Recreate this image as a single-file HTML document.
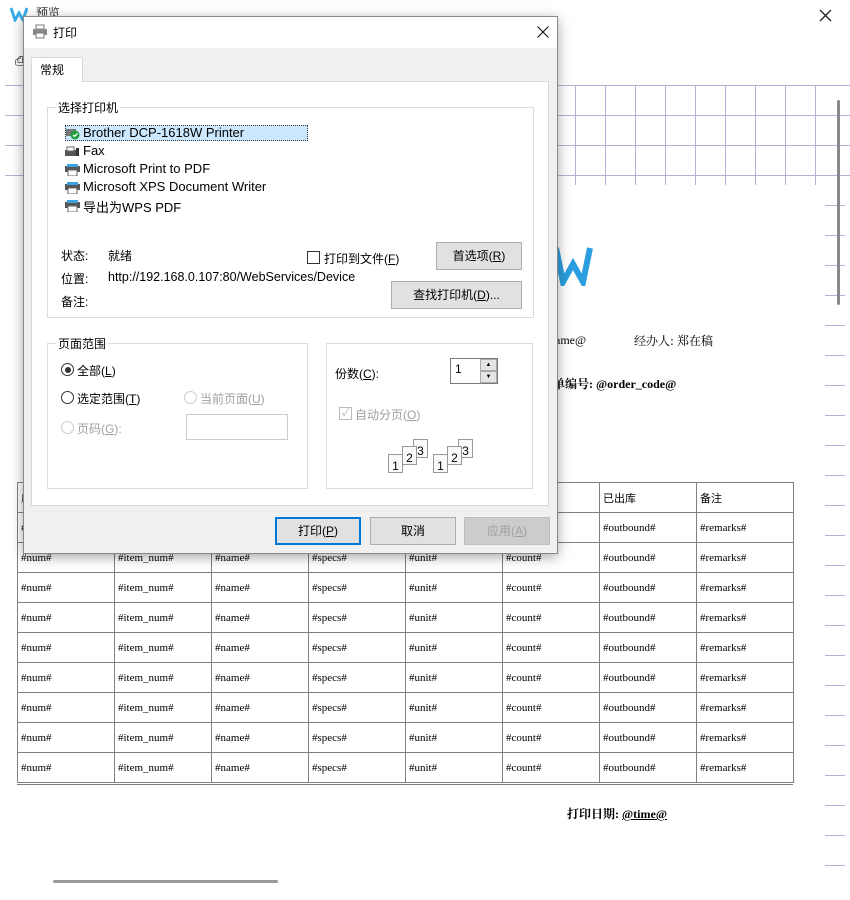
<!DOCTYPE html>
<html><head><meta charset="utf-8"><style>
*{margin:0;padding:0;box-sizing:border-box}
body{width:850px;height:900px;background:#fff;position:relative;overflow:hidden;font-family:"Liberation Sans","Noto Sans CJK SC",sans-serif;font-size:12px;color:#000}
.a{position:absolute}
.hl{position:absolute;height:1px;background:#b4b0d8}
.vl{position:absolute;width:1px;background:#b4b0d8}
table{position:absolute;left:17px;top:482px;border-collapse:collapse;font-family:"Liberation Serif","Noto Serif CJK SC",serif;font-size:11px}
td{border:1px solid #808080;width:97px;height:30px;padding-left:3px;vertical-align:middle;white-space:nowrap}
.dlg{position:absolute;left:23px;top:16px;width:535px;height:538px;background:#f0f0f0;border:1px solid #888;box-shadow:0 3px 12px rgba(0,0,0,.35)}
.grp{position:absolute;border:1px solid #dcdcdc}
.gl{position:absolute;top:-9px;left:8px;background:#fff;padding:0 2px;font-size:12px}
.btn{position:absolute;background:#e1e1e1;border:1px solid #adadad;text-align:center;font-size:12px}
.pg{position:absolute;width:15px;height:19px;background:#fafafa;border:1px solid #999;font-size:12px;text-align:center;line-height:22px}
.u{text-decoration:underline}
.gray{color:#a0a0a0}
</style></head><body>
<div class="a" style="left:10px;top:6px;width:18px;height:16px">
<svg width="18" height="16"><path d="M1 2 L5 14 L9 7 L13 14 L17 2" fill="none" stroke="#3aaee8" stroke-width="3"/></svg></div>
<div class="a" style="left:36px;top:4px;font-size:12px;color:#333">预览</div>
<div class="a" style="left:819px;top:9px"><svg width="13" height="13"><path d="M1 1L12 12M12 1L1 12" stroke="#222" stroke-width="1.3"/></svg></div>
<div class="a" style="left:15px;top:53px;font-size:13px">⎙</div>
<div class="hl" style="left:5px;top:85px;width:845px"></div>
<div class="hl" style="left:5px;top:115px;width:845px"></div>
<div class="hl" style="left:5px;top:145px;width:845px"></div>
<div class="hl" style="left:5px;top:175px;width:845px"></div>
<div class="vl" style="left:575px;top:85px;height:100px"></div>
<div class="vl" style="left:605px;top:85px;height:100px"></div>
<div class="vl" style="left:635px;top:85px;height:100px"></div>
<div class="vl" style="left:665px;top:85px;height:100px"></div>
<div class="vl" style="left:695px;top:85px;height:100px"></div>
<div class="vl" style="left:725px;top:85px;height:100px"></div>
<div class="vl" style="left:755px;top:85px;height:100px"></div>
<div class="vl" style="left:785px;top:85px;height:100px"></div>
<div class="vl" style="left:815px;top:85px;height:100px"></div>
<div id="ticks"></div>
<div class="a" style="left:837px;top:100px;width:3px;height:205px;background:#8a8a8a;border-radius:2px"></div>
<div class="a" style="left:553px;top:246px;width:42px;height:40px">
<svg width="42" height="40"><path d="M3 2 L10 36 L20 18 L30 36 L37 2" fill="none" stroke="#2b9ee0" stroke-width="6"/></svg></div>
<div class="a" style="left:555px;top:333px;font-family:'Liberation Serif',serif;font-size:12px">ame@</div>
<div class="a" style="left:634px;top:332px;font-size:12px;font-family:'Noto Serif CJK SC',serif">经办人: 郑在稿</div>
<div class="a" style="left:553px;top:375px;font-size:12px;font-weight:bold;font-family:'Liberation Serif','Noto Serif CJK SC',serif">单编号: @order_code@</div>
<table id="tb"></table>
<div class="a" style="left:17px;top:784px;width:776px;height:1px;background:#808080"></div>
<div class="a" style="left:567px;top:805px;font-size:12px;font-weight:bold;font-family:'Liberation Serif','Noto Serif CJK SC',serif">打印日期: <span class="u">@time@</span></div>
<div class="a" style="left:53px;top:880px;width:225px;height:3px;background:#999;border-radius:2px"></div>

<div class="dlg">
 <div class="a" style="left:0;top:0;width:533px;height:31px;background:#fff"></div>
 <div class="a" style="left:8px;top:7px;width:16px;height:14px">
 <svg width="16" height="15"><rect x="4" y="1" width="8" height="4" fill="#fff" stroke="#777"/><rect x="1" y="5" width="14" height="6" fill="#8a8a8a"/><rect x="4" y="9" width="8" height="5" fill="#fff" stroke="#777"/></svg></div>
 <div class="a" style="left:29px;top:7px;font-size:12px">打印</div>
 <div class="a" style="left:513px;top:9px"><svg width="12" height="12"><path d="M0.5 0.5L11.5 11.5M11.5 0.5L0.5 11.5" stroke="#111" stroke-width="1.1"/></svg></div>
 <div class="a" style="left:7px;top:40px;width:52px;height:25px;background:#fff;border:1px solid #d9d9d9;border-bottom:none;z-index:2;padding:3px 0 0 8px">常规</div>
 <div class="a" style="left:7px;top:64px;width:518px;height:425px;background:#fff;border:1px solid #d9d9d9">
  <div class="grp" style="left:15px;top:25px;width:487px;height:211px">
   <div class="gl">选择打印机</div>
   <div class="a" style="left:17px;top:17px;width:243px;height:16px;background:#cce8ff;border:1px dotted #333"></div>
   <div class="a" style="left:18px;top:18px;width:14px;height:14px"><svg width="14" height="14"><rect x="0" y="3" width="10" height="7" fill="#777"/><circle cx="9" cy="9" r="4.5" fill="#1f9e3a"/><path d="M7 9 l1.5 1.5 l3-3" stroke="#fff" fill="none" stroke-width="1.3"/></svg></div>
   <div class="a" style="left:35px;top:17px;font-size:13px">Brother DCP-1618W Printer</div>
   <div class="a" style="left:17px;top:38px;width:15px;height:12px"><svg width="15" height="12"><rect x="0" y="4" width="11" height="6" fill="#555"/><rect x="2" y="1" width="7" height="4" fill="#fff" stroke="#666"/><rect x="11" y="2" width="3" height="8" fill="#333"/></svg></div>
   <div class="a" style="left:35px;top:35px;font-size:13px">Fax</div>
   <div class="a" style="left:17px;top:56px;width:15px;height:12px"><svg width="15" height="12"><rect x="0" y="2" width="15" height="6" fill="#555"/><rect x="2" y="0" width="11" height="3" fill="#3b9fe0"/><rect x="3" y="6" width="9" height="6" fill="#fff" stroke="#666"/></svg></div>
   <div class="a" style="left:35px;top:53px;font-size:13px">Microsoft Print to PDF</div>
   <div class="a" style="left:17px;top:74px;width:15px;height:12px"><svg width="15" height="12"><rect x="0" y="2" width="15" height="6" fill="#555"/><rect x="2" y="0" width="11" height="3" fill="#3b9fe0"/><rect x="3" y="6" width="9" height="6" fill="#fff" stroke="#666"/></svg></div>
   <div class="a" style="left:35px;top:71px;font-size:13px">Microsoft XPS Document Writer</div>
   <div class="a" style="left:17px;top:92px;width:15px;height:12px"><svg width="15" height="12"><rect x="0" y="2" width="15" height="6" fill="#555"/><rect x="2" y="0" width="11" height="3" fill="#3b9fe0"/><rect x="3" y="6" width="9" height="6" fill="#fff" stroke="#666"/></svg></div>
   <div class="a" style="left:35px;top:89px;font-size:13px">导出为WPS PDF</div>
   <div class="a" style="left:13px;top:139px">状态:</div>
   <div class="a" style="left:60px;top:139px">就绪</div>
   <div class="a" style="left:13px;top:162px">位置:</div>
   <div class="a" style="left:60px;top:162px;font-size:12.5px">http://192.168.0.107:80/WebServices/Device</div>
   <div class="a" style="left:13px;top:185px">备注:</div>
   <div class="a" style="left:259px;top:143px;width:13px;height:13px;border:1px solid #333;background:#fff"></div>
   <div class="a" style="left:276px;top:142px">打印到文件(<span class="u">F</span>)</div>
   <div class="btn" style="left:388px;top:134px;width:86px;height:28px;line-height:26px">首选项(<span class="u">R</span>)</div>
   <div class="btn" style="left:343px;top:173px;width:131px;height:28px;line-height:26px">查找打印机(<span class="u">D</span>)...</div>
  </div>
  <div class="grp" style="left:15px;top:261px;width:261px;height:146px">
   <div class="gl">页面范围</div>
   <div class="a" style="left:13px;top:19px;width:13px;height:13px;border:1px solid #333;border-radius:50%;background:#fff"><div class="a" style="left:2.5px;top:2.5px;width:6px;height:6px;border-radius:50%;background:#333"></div></div>
   <div class="a" style="left:29px;top:18px">全部(<span class="u">L</span>)</div>
   <div class="a" style="left:13px;top:47px;width:13px;height:13px;border:1px solid #333;border-radius:50%;background:#fff"></div>
   <div class="a" style="left:29px;top:46px">选定范围(<span class="u">T</span>)</div>
   <div class="a" style="left:136px;top:47px;width:13px;height:13px;border:1px solid #ccc;border-radius:50%"></div>
   <div class="a gray" style="left:152px;top:46px">当前页面(<span class="u">U</span>)</div>
   <div class="a" style="left:13px;top:77px;width:13px;height:13px;border:1px solid #ccc;border-radius:50%"></div>
   <div class="a gray" style="left:29px;top:76px">页码(<span class="u">G</span>):</div>
   <div class="a" style="left:138px;top:70px;width:102px;height:26px;border:1px solid #ccc"></div>
  </div>
  <div class="grp" style="left:294px;top:261px;width:207px;height:146px">
   <div class="a" style="left:8px;top:21px">份数(<span class="u">C</span>):</div>
   <div class="a" style="left:123px;top:14px;width:48px;height:26px;border:1px solid #7a7a7a;background:#fff;padding:3px 0 0 4px">1</div>
   <div class="a" style="left:153px;top:15px;width:17px;height:12px;background:#e5e5e5;border:1px solid #aaa;font-size:6px;text-align:center;line-height:10px">▲</div>
   <div class="a" style="left:153px;top:27px;width:17px;height:12px;background:#e5e5e5;border:1px solid #aaa;font-size:6px;text-align:center;line-height:10px">▼</div>
   <div class="a" style="left:12px;top:63px;width:13px;height:13px;border:1px solid #bbb;color:#aaa;font-size:10px;line-height:11px;text-align:center">✓</div>
   <div class="a gray" style="left:28px;top:62px">自动分页(<span class="u">O</span>)</div>
   <div class="pg" style="left:86px;top:95px">3</div>
   <div class="pg" style="left:75px;top:102px">2</div>
   <div class="pg" style="left:61px;top:110px">1</div>
   <div class="pg" style="left:131px;top:95px">3</div>
   <div class="pg" style="left:120px;top:102px">2</div>
   <div class="pg" style="left:106px;top:110px">1</div>
  </div>
 </div>
 <div class="btn" style="left:251px;top:500px;width:86px;height:28px;line-height:24px;border:2px solid #0078d7">打印(<span class="u">P</span>)</div>
 <div class="btn" style="left:346px;top:500px;width:86px;height:28px;line-height:26px">取消</div>
 <div class="btn gray" style="left:440px;top:500px;width:86px;height:28px;line-height:26px;background:#ccc;border-color:#bfbfbf">应用(<span class="u">A</span>)</div>
</div>
<script>
var t='';for(var y=205;y<=870;y+=30)t+='<div class="hl" style="left:825px;top:'+y+'px;width:20px"></div>';document.getElementById('ticks').innerHTML=t;
var h='<tr>'+'<td>序号</td><td></td><td></td><td></td><td></td><td></td><td style="font-family:Noto Sans CJK SC">已出库</td><td style="font-family:Noto Sans CJK SC">备注</td></tr>';
for(var i=0;i<9;i++)h+='<tr><td>#num#</td><td>#item_num#</td><td>#name#</td><td>#specs#</td><td>#unit#</td><td>#count#</td><td>#outbound#</td><td>#remarks#</td></tr>';
document.getElementById('tb').innerHTML=h;
</script>
</body></html>
